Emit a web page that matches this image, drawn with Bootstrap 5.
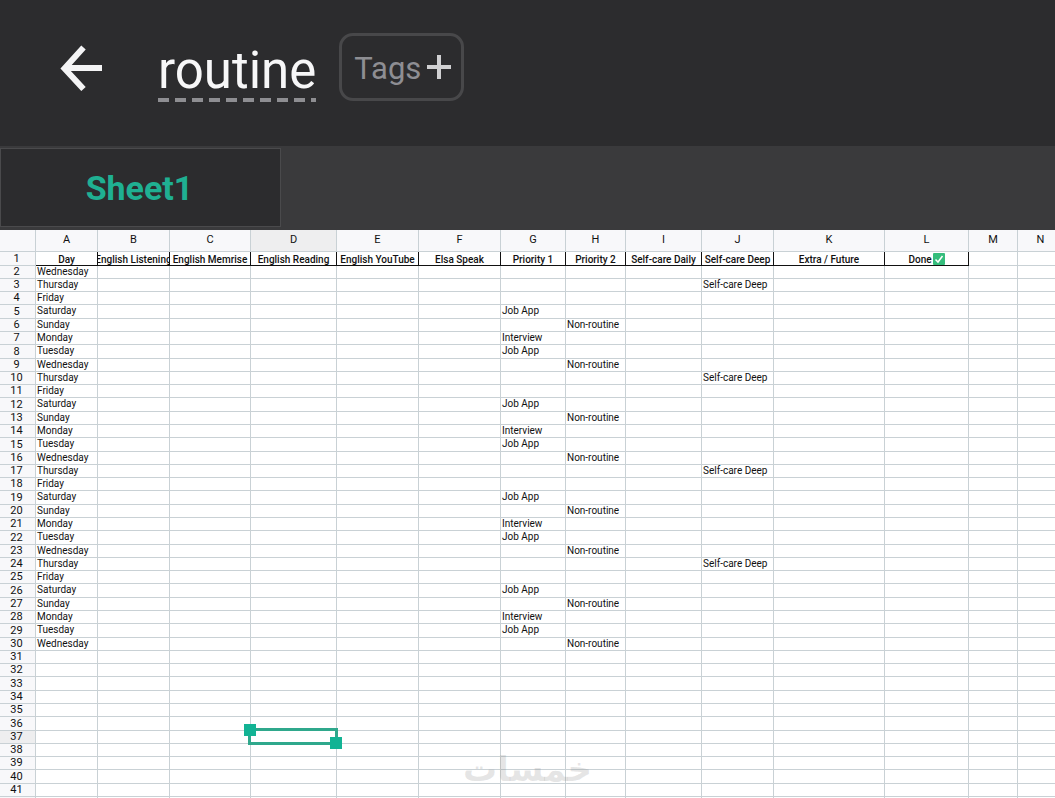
<!DOCTYPE html>
<html lang="en">
<head>
<meta charset="utf-8">
<meta name="viewport" content="width=device-width, initial-scale=1">
<title>routine</title>
<link href="https://cdn.jsdelivr.net/npm/bootstrap@5.3.0/dist/css/bootstrap.min.css" rel="stylesheet">
<style>
  body { font-family: Roboto, "Liberation Sans", sans-serif; background: #fff; }
  .topbar { background: #2c2c2e; height: 146px; padding: 0 60px 12px; }
  .back-btn { color: #f4f4f5; width: 42px; margin-right: 56px; }
  .doc-name { color: #f7f7f8; font-size: 51px; line-height: 58px; padding: 2px 0; margin-top: 8px;
    background: repeating-linear-gradient(90deg, #8e8e92 0 11px, transparent 11px 17px) left bottom / 100% 4px no-repeat; }
  .tags-btn { border: 3px solid #48484a; border-radius: 14px; height: 68px; margin-left: 23px;
    padding: 0 10px 0 12px; font-size: 31px; line-height: 40px; color: #8e8e93; gap: 6px; }
  .tabstrip { background: #3a3a3c; height: 84px; padding: 2px 0 3px; }
  .sheet-tab { width: 281px; background: #2c2c2e; border: 1px solid #4a4a4c; color: #1fb092;
    font-size: 34px; font-weight: 700; line-height: 40px; padding: 0 14px 0 12px; }
  .grid-table { table-layout: fixed; border-collapse: separate; border-spacing: 0; width: 100%; min-width: 1064px;
    font-size: 11px; line-height: 12px; color: #111; }
  .grid-table th, .grid-table td { padding: 0; border: 0 solid #c9d1d5; border-width: 0 1px 1px 0; white-space: nowrap; font-weight: 400; }
  .grid-table thead th { height: 22px; background: #f8f8fa; text-align: center; padding-bottom: 2px; }
  .grid-table tbody tr { height: 13px; }
  .grid-table tbody tr:nth-child(7n+1), .grid-table tbody tr:nth-child(7n+5) { height: 14px; }
  .grid-table tbody th { background: #f8f8fa; text-align: center; padding-right: 2px; }
  .grid-table tbody td { padding-left: 1px; vertical-align: top; font-size: 10px; }
  .grid-table thead th.current, .grid-table tbody th.current { background: #eeeeef; }
  .grid-table .titles td { border-color: #111; padding: 0; text-align: center; }
  .grid-table .titles td.plain { border-color: #c9d1d5; }
  .title-text { height: 13px; line-height: 15px; overflow: hidden; font-weight: 500; display: flex; justify-content: center; }
  .title-text svg { flex: none; margin: 1px 0 0 1px; }
  .selection { inset: -3px -2px -2px -3px; border: 3px solid #2fa88c; }
  .handle { width: 12px; height: 12px; background: #12b394; }
  .handle-start { left: -7px; top: -7px; }
  .handle-end { right: -7px; bottom: -7px; }
  .watermark { left: 0; right: 0; bottom: 7px; text-align: center; font: 700 34px/44px "DejaVu Sans", sans-serif; color: rgba(120,120,120,.19); pointer-events: none; }
</style>
</head>
<body>
<div class="d-flex flex-column vh-100 overflow-hidden position-relative">
  <header class="topbar d-flex align-items-center flex-shrink-0">
    <button type="button" class="back-btn btn p-0 border-0 d-flex" aria-label="Back">
      <svg width="42" height="48" viewBox="0 0 42 48" fill="none" stroke="currentColor" stroke-width="6"><path d="M23.500 4.500L4.500 25.500L23.500 46M4 25H42"/></svg>
    </button>
    <h1 class="doc-name fw-normal mb-0">routine</h1>
    <button type="button" class="tags-btn btn d-flex align-items-center"><span class="pt-1">Tags</span>
      <svg width="24" height="24" viewBox="0 0 24 24" fill="none" stroke="#d0d0d2" stroke-width="4"><path d="M12 0V24M0 12H24"/></svg>
    </button>
  </header>
  <nav class="tabstrip d-flex flex-shrink-0" aria-label="Sheets">
    <button type="button" class="sheet-tab btn rounded-0">Sheet1</button>
  </nav>
  <main class="flex-grow-1 overflow-hidden">
    <table class="grid-table">
      <colgroup id="cols"></colgroup>
      <thead><tr id="letters"></tr></thead>
      <tbody id="rows"></tbody>
    </table>
  </main>
  <div class="watermark position-absolute" lang="ar" dir="rtl">خمسات</div>
</div>
<script src="https://cdn.jsdelivr.net/npm/bootstrap@5.3.0/dist/js/bootstrap.bundle.min.js"></script>
<script>
  const widths = [36, 62, 72, 81, 86, 82, 82, 65, 60, 76, 72, 111, 84, 49];
  const letters = 'ABCDEFGHIJKLMN'.split('');
  const titles = ['Day', 'English Listening', 'English Memrise', 'English Reading', 'English YouTube', 'Elsa Speak',
    'Priority 1', 'Priority 2', 'Self-care Daily', 'Self-care Deep', 'Extra / Future', 'Done'];
  const days = ['Wednesday', 'Thursday', 'Friday', 'Saturday', 'Sunday', 'Monday', 'Tuesday'];
  const tasks = { Saturday: ['G', 'Job App'], Monday: ['G', 'Interview'], Tuesday: ['G', 'Job App'],
    Sunday: ['H', 'Non-routine'], Wednesday: ['H', 'Non-routine'], Thursday: ['J', 'Self-care Deep'] };
  const check = '<svg width="12" height="12" viewBox="0 0 12 12" role="img" aria-label="done"><rect width="12" height="12" rx="1" fill="#35bd7c"/><path d="M2.500 6.500L5 9L9.500 3" fill="none" stroke="#fff" stroke-width="1.500"/></svg>';
  const lastDayRow = 30, rowCount = 41;

  document.getElementById('cols').innerHTML = widths.map(w => `<col style="width:${w}px">`).join('') + '<col>';
  document.getElementById('letters').innerHTML = '<th></th>' +
    letters.map(l => `<th scope="col"${l === 'D' ? ' class="current"' : ''}>${l}</th>`).join('');

  let html = '<tr class="titles"><th scope="row">1</th>' + letters.map((l, i) => titles[i]
    ? `<td><div class="title-text">${titles[i]}${l === 'L' ? check : ''}</div></td>` : '<td class="plain"></td>').join('') + '</tr>';
  for (let r = 2; r <= rowCount; r++) {
    const day = r <= lastDayRow ? days[(r - 2) % 7] : '';
    // Row 2 starts the plan and has no task of its own
    const task = r > 2 && tasks[day] || [];
    html += `<tr><th scope="row"${r === 37 ? ' class="current"' : ''}>${r}</th>` + letters.map(l => {
      if (r === 37 && l === 'D') return '<td class="position-relative"><div class="selection position-absolute"><span class="handle handle-start position-absolute"></span><span class="handle handle-end position-absolute"></span></div></td>';
      return `<td>${l === 'A' ? day : l === task[0] ? task[1] : ''}</td>`;
    }).join('') + '</tr>';
  }
  // Blank row that closes the grid
  html += '<tr><th></th>' + '<td></td>'.repeat(letters.length) + '</tr>';
  document.getElementById('rows').innerHTML = html;
</script>
</body>
</html>
